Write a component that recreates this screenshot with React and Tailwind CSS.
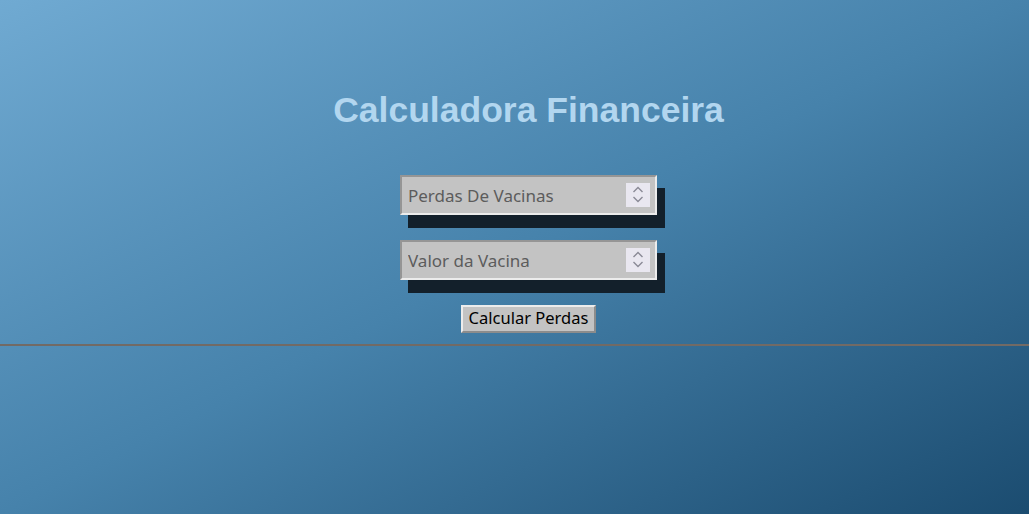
import { useState } from 'react';

function Spinner() {
    return (
        <div className="w-[24px] h-[24px] bg-[#e9e7f0] flex flex-col items-center justify-center gap-[3px]">
            <svg width="12" height="7" viewBox="0 0 12 7" fill="none" stroke="#8a8a96" strokeWidth="1.4">
                <path d="M1.5 6 L6 1.5 L10.5 6" />
            </svg>
            <svg width="12" height="7" viewBox="0 0 12 7" fill="none" stroke="#8a8a96" strokeWidth="1.4">
                <path d="M1.5 1 L6 5.5 L10.5 1" />
            </svg>
        </div>
    );
}

function NumberField({ placeholder, value, onChange }) {
    return (
        <div className="w-[257px] h-[40px] flex items-center bg-[#c3c3c3] border-2 border-t-[#959595] border-l-[#959595] border-b-[#ececec] border-r-[#ececec] shadow-[8px_13px_0_#13202b] pl-[6px] pr-[5px]">
            <input
                type="text"
                className="flex-1 min-w-0 bg-transparent outline-none text-[17px] text-[#4a4a4a] placeholder-[#5c5c5c] pt-[2px]"
                placeholder={placeholder}
                value={value}
                onChange={e => onChange(e.target.value)}
            />
            <Spinner />
        </div>
    );
}

export default function App() {
    const [perdas, setPerdas] = useState('');
    const [valor, setValor] = useState('');

    return (
        <div className="min-h-screen bg-gradient-to-br from-[#70aad2] via-[#4682ab] to-[#1b4c70] font-['Noto_Sans',sans-serif]">
            <div className="flex flex-col items-center pt-[93px] pl-[28px]">
                <h1 className="font-['Liberation_Sans',Arial,sans-serif] font-bold text-[35.5px] leading-none text-[#b2d6ef]">
                    Calculadora Financeira
                </h1>

                <div className="mt-[46px] flex flex-col gap-[25px]">
                    <NumberField placeholder="Perdas De Vacinas" value={perdas} onChange={setPerdas} />
                    <NumberField placeholder="Valor da Vacina" value={valor} onChange={setValor} />
                </div>

                <button
                    type="button"
                    className="mt-[25px] h-[28px] px-[6px] bg-[#c3c3c3] border-2 border-t-[#ececec] border-l-[#ececec] border-b-[#8c8c8c] border-r-[#8c8c8c] text-[16.5px] leading-none text-black"
                >
                    Calcular Perdas
                </button>
            </div>

            <hr className="mt-[11px] border-0 border-t-2 border-[#726a65]" />
        </div>
    );
}
